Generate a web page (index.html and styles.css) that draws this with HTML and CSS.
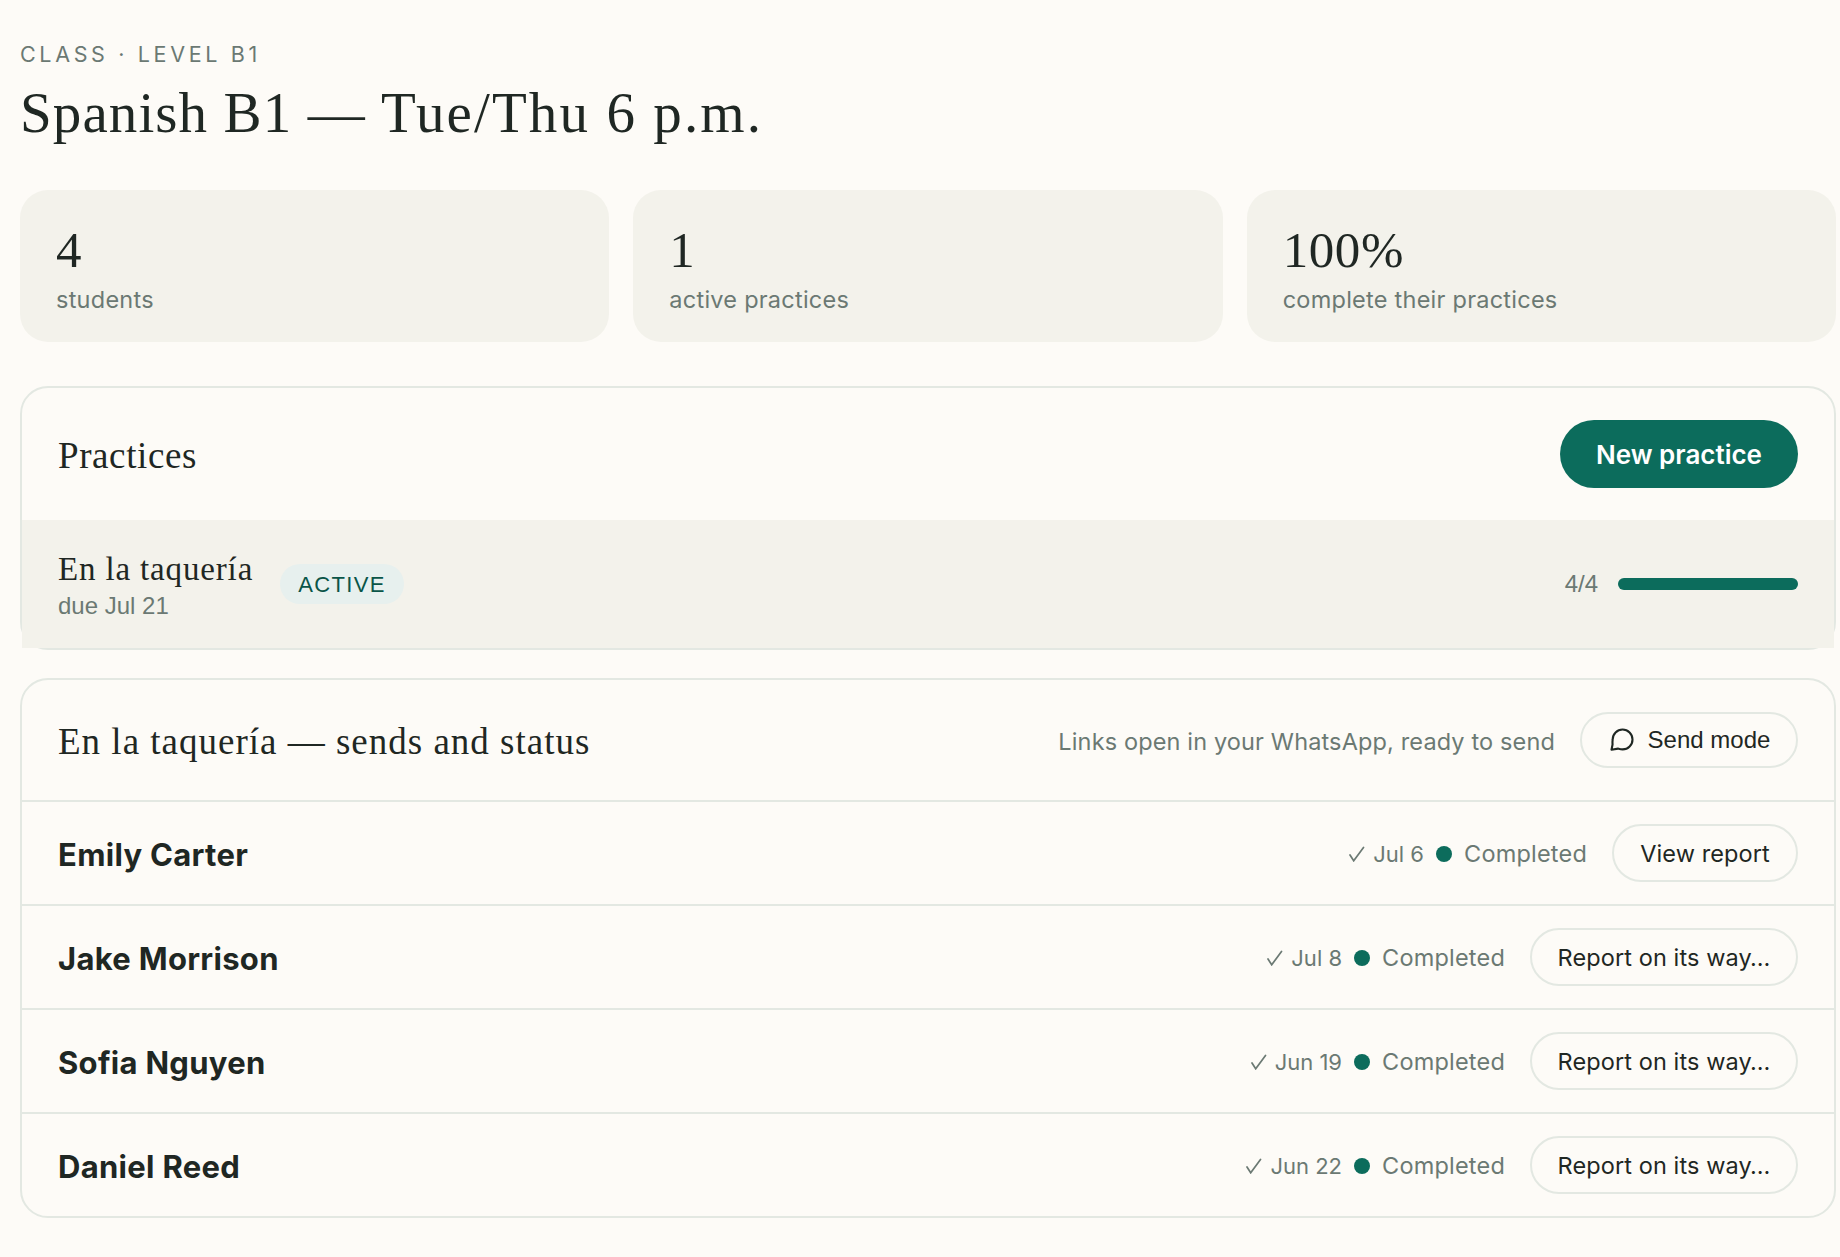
FILE: index.html
```html
<!DOCTYPE html>
<html lang="en">
  <head>
    <meta charset="UTF-8">
    <meta name="viewport" content="width=device-width, initial-scale=1">
    <title>Spanish B1 — Tue/Thu 6 p.m.</title>
    <link rel="stylesheet" href="styles.css">
  </head>
  <body>
    <main class="page">
      <header class="page-header">
        <p class="eyebrow">Class · Level B1</p>
        <h1 class="page-title">Spanish B1 — <span class="schedule">Tue/Thu 6 p.m.</span></h1>
      </header>

      <section class="stats">
        <div class="stat">
          <div class="stat-value">4</div>
          <div class="stat-label">students</div>
        </div>
        <div class="stat">
          <div class="stat-value">1</div>
          <div class="stat-label">active practices</div>
        </div>
        <div class="stat">
          <div class="stat-value">100%</div>
          <div class="stat-label">complete their practices</div>
        </div>
      </section>

      <section class="card practices">
        <div class="card-header">
          <h2 class="card-title">Practices</h2>
          <button class="btn-primary">New practice</button>
        </div>
        <div class="practice-row">
          <div class="practice-info">
            <div class="practice-name">En la taquería</div>
            <div class="practice-due">due Jul 21</div>
          </div>
          <span class="badge">Active</span>
          <span class="practice-count">4/4</span>
          <div class="progress"><div class="progress-fill" style="width: 100%"></div></div>
        </div>
      </section>

      <section class="card sends">
        <div class="card-header">
          <h2 class="card-title sends-title">En la taquería — sends and status</h2>
          <div class="card-actions">
            <span class="hint">Links open in your WhatsApp, ready to send</span>
            <button class="btn btn-send">
              <svg class="icon-chat" viewBox="0 0 24 24" fill="none" stroke="currentColor" stroke-width="1.8" stroke-linecap="round" stroke-linejoin="round">
                <path d="M21 11.5a8.4 8.4 0 0 1-8.5 8.5c-1.5 0-2.6-.3-3.9-.6L3 20.3l.9-4.4c-.1-1.3-.1-2.800.1-4.400a8.500 8.500 0 0 1 17 0z"/>
              </svg>
              <span>Send mode</span>
            </button>
          </div>
        </div>
        <div class="student-row">
          <span class="student-name">Emily Carter</span>
          <span class="sent"><svg class="icon-check" viewBox="0 0 16 16"><path d="M1 9 4.700 14.800 14.500 1.500"/></svg>Jul 6</span>
          <span class="dot"></span>
          <span class="status">Completed</span>
          <button class="btn">View report</button>
        </div>
        <div class="student-row">
          <span class="student-name">Jake Morrison</span>
          <span class="sent"><svg class="icon-check" viewBox="0 0 16 16"><path d="M1 9 4.700 14.800 14.500 1.500"/></svg>Jul 8</span>
          <span class="dot"></span>
          <span class="status">Completed</span>
          <button class="btn btn-wide">Report on its way…</button>
        </div>
        <div class="student-row">
          <span class="student-name">Sofia Nguyen</span>
          <span class="sent"><svg class="icon-check" viewBox="0 0 16 16"><path d="M1 9 4.700 14.800 14.500 1.500"/></svg>Jun 19</span>
          <span class="dot"></span>
          <span class="status">Completed</span>
          <button class="btn btn-wide">Report on its way…</button>
        </div>
        <div class="student-row">
          <span class="student-name">Daniel Reed</span>
          <span class="sent"><svg class="icon-check" viewBox="0 0 16 16"><path d="M1 9 4.700 14.800 14.500 1.500"/></svg>Jun 22</span>
          <span class="dot"></span>
          <span class="status">Completed</span>
          <button class="btn btn-wide">Report on its way…</button>
        </div>
      </section>
    </main>
  </body>
</html>
```
FILE: styles.css
```css
:root {
  --bg: #fdfbf7;
  --surface: #f3f2eb;
  --line: #e3e8e2;
  --ink: #1f2723;
  --muted: #6b7973;
  --green: #0c6c5c;
  --serif: Charter, "Liberation Serif", serif;
  --sans: Inter, "Liberation Sans", sans-serif;
  --sans-alt: "Liberation Sans", sans-serif;
}

* {
  box-sizing: border-box;
}

body {
  margin: 0;
  background: var(--bg);
  color: var(--ink);
  font-family: var(--sans);
  font-size: 24px;
}

button {
  font-family: inherit;
  color: inherit;
  white-space: nowrap;
}

.page {
  width: 1816px;
  margin-left: 20px;
  padding-top: 39px;
}

/* Header */
.page-header {
  height: 151px;
}

.eyebrow {
  margin: 0;
  font-size: 21.5px;
  line-height: 30px;
  letter-spacing: 3.65px;
  text-transform: uppercase;
  color: var(--muted);
}

.page-title {
  margin: 10px 0 0;
  font-family: var(--serif);
  font-size: 57px;
  font-weight: 400;
  line-height: 68px;
  letter-spacing: 1.1px;
}

.schedule {
  letter-spacing: 2.1px;
}

/* Stats */
.stats {
  display: grid;
  grid-template-columns: repeat(3, 1fr);
  gap: 24px;
  margin-bottom: 44px;
}

.stat {
  height: 152px;
  padding: 32px 36px;
  border-radius: 28px;
  background: var(--surface);
}

.stat-value {
  font-family: var(--serif);
  font-size: 51px;
  line-height: 56px;
  letter-spacing: 0.6px;
}

.stat-label {
  margin-top: 5px;
  font-size: 23.5px;
  line-height: 34px;
  letter-spacing: 0.25px;
  color: var(--muted);
}

/* Cards */
.card {
  border: 2px solid var(--line);
  border-radius: 28px;
}

.practices {
  margin-bottom: 28px;
}

.card-header {
  display: flex;
  align-items: center;
  justify-content: space-between;
  padding: 32px 36px;
}

.card-title {
  margin: 0;
  padding-top: 4px;
  font-family: var(--serif);
  font-size: 37px;
  font-weight: 400;
  line-height: 44px;
  letter-spacing: 0.6px;
}

.sends-title {
  letter-spacing: 1px;
}

.btn-primary {
  width: 238px;
  height: 68px;
  padding: 0;
  border: 0;
  border-radius: 34px;
  background: var(--green);
  color: #fff;
  font-size: 26px;
  font-weight: 600;
}

.practice-row {
  display: flex;
  align-items: center;
  height: 128px;
  padding: 0 36px;
  background: var(--surface);
}

.practice-info {
  width: 195px;
  padding-top: 4px;
  white-space: nowrap;
}

.practice-name {
  font-family: var(--serif);
  font-size: 33px;
  line-height: 38px;
  letter-spacing: 0.85px;
}

.practice-due {
  font-family: var(--sans-alt);
  font-size: 24px;
  line-height: 35px;
  color: var(--muted);
}

.badge {
  width: 124px;
  height: 40px;
  margin-left: 27px;
  border-radius: 20px;
  background: #e7f0ee;
  color: #0a5548;
  font-family: var(--sans-alt);
  font-size: 22px;
  line-height: 41px;
  letter-spacing: 1.32px;
  text-align: center;
  text-transform: uppercase;
}

.practice-count {
  margin-left: auto;
  font-family: var(--sans-alt);
  font-size: 24px;
  color: var(--muted);
}

.progress {
  width: 180px;
  height: 12px;
  margin-left: 20px;
  border-radius: 6px;
  background: var(--line);
}

.progress-fill {
  height: 100%;
  border-radius: 6px;
  background: var(--green);
}

/* Sends */
.card-actions {
  display: flex;
  align-items: center;
  gap: 25px;
}

.hint,
.status {
  font-size: 23.5px;
  letter-spacing: 0.2px;
  color: var(--muted);
}

.hint {
  padding-top: 2px;
  letter-spacing: 0.14px;
}

.btn {
  width: 186px;
  height: 58px;
  padding: 0;
  border: 2px solid var(--line);
  border-radius: 29px;
  background: transparent;
  font-size: 23.5px;
  letter-spacing: 0.1px;
}

.btn-wide {
  width: 268px;
}

.btn-send {
  display: flex;
  align-items: center;
  justify-content: center;
  gap: 12px;
  width: 218px;
  height: 56px;
  font-family: var(--sans-alt);
  font-size: 24px;
  letter-spacing: 0;
}

.icon-chat {
  width: 28px;
  height: 28px;
}

.student-row {
  display: flex;
  align-items: center;
  height: 104px;
  padding: 0 36px;
  border-top: 2px solid var(--line);
}

.student-name {
  margin-right: auto;
  padding-top: 2px;
  font-size: 31px;
  font-weight: 700;
  letter-spacing: 0.3px;
}

.sent {
  padding-top: 1px;
  font-size: 22px;
  color: var(--muted);
}

.icon-check {
  width: 16px;
  height: 16px;
  margin-right: 8px;
  fill: none;
  stroke: currentColor;
  stroke-width: 1.7;
  stroke-linecap: round;
}

.dot {
  width: 16px;
  height: 16px;
  margin: 1px 12px 0 12px;
  border-radius: 50%;
  background: var(--green);
}

.status {
  margin-right: 25px;
}
```
